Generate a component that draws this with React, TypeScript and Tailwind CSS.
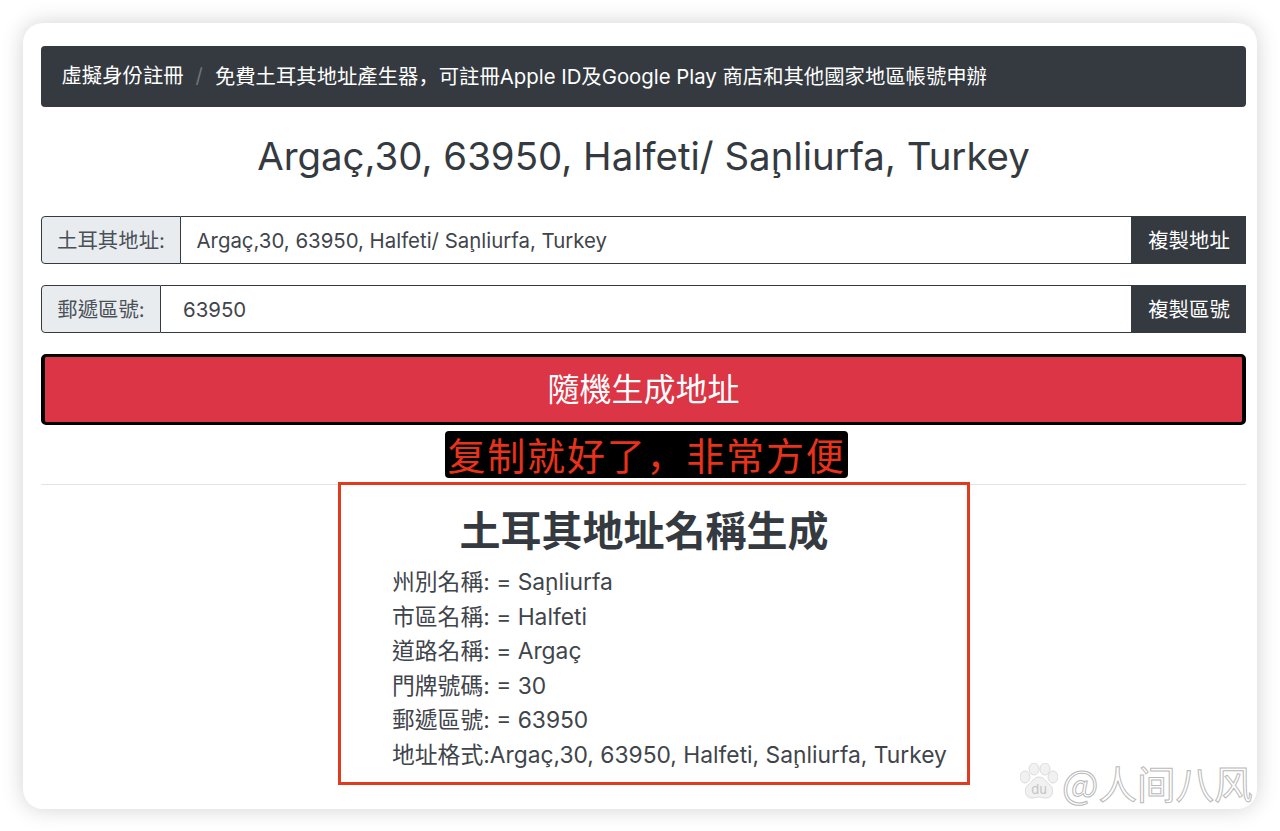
import React from "react";

const FONT = "font-['Inter','Noto_Sans_CJK_TC',sans-serif]";
const CITY = "Sa\u0327nliurfa";

function InputRow({ label, labelW, value, pad, action, mt }: { label: string; labelW: string; value: string; pad: string; action: string; mt: string }) {
  return (
    <div className={`flex h-[48px] ${mt}`}>
      <div className={`${labelW} shrink-0 flex items-center justify-center pt-[2px] bg-[#e9ecef] border border-[#343a40] rounded-l-[4px] text-[20.4px] text-[#495057]`}>{label}</div>
      <div className={`flex-1 flex items-center pt-[2px] ${pad} bg-white border-y border-r border-[#343a40] text-[20.4px] text-[#3f454b]`}>{value}</div>
      <div className="w-[114px] shrink-0 flex items-center justify-center pt-[2px] bg-[#343a40] text-white text-[20.4px]">{action}</div>
    </div>
  );
}

export default function App() {
  const lines = [
    `州別名稱: = ${CITY}`,
    "市區名稱: = Halfeti",
    "道路名稱: = Argaç",
    "門牌號碼: = 30",
    "郵遞區號: = 63950",
    `地址格式:Argaç,30, 63950, Halfeti, ${CITY}, Turkey`,
  ];
  return (
    <div className={`${FONT} relative w-[1280px] h-[831px] overflow-hidden bg-white pt-[23px] pl-[23px]`}>
      <div className="relative w-[1234px] h-[786px] bg-white rounded-[20px] shadow-[0_0_22px_rgba(0,0,0,0.18)] pl-[18px] pr-[11px] pt-[23px]">
        <nav className="h-[61px] flex items-center bg-[#343a40] rounded-[4px] pl-[20.5px] text-[20.35px] text-white whitespace-nowrap">
          <span>虛擬身份註冊</span>
          <span className="mx-[12px] text-[#6c757d]">/</span>
          <span>免費土耳其地址產生器<span className="font-['Noto_Sans_CJK_SC',sans-serif]">，</span>可註冊Apple ID及Google Play 商店和其他國家地區帳號申辦</span>
        </nav>
        <h1 className="h-[100px] flex items-center justify-center text-[38.4px] text-[#343a40] whitespace-nowrap">{`Argaç,30, 63950, Halfeti/ ${CITY}, Turkey`}</h1>
        <InputRow mt="mt-[9px]" label="土耳其地址:" labelW="w-[140px]" value={`Argaç,30, 63950, Halfeti/ ${CITY}, Turkey`} pad="pl-[15.5px]" action="複製地址" />
        <InputRow mt="mt-[21px]" label="郵遞區號:" labelW="w-[120px]" value="63950" pad="pl-[22px]" action="複製區號" />
        <button className="mt-[21px] w-full h-[71px] flex items-center justify-center bg-[#dc3545] border-y-[3px] border-x-[4px] border-black rounded-[5px] text-white text-[32px]">隨機生成地址</button>
        <div className="mt-[6px] pl-[404px]">
          <div className="h-[47px] w-[403px] flex items-center justify-center bg-black rounded-[4px] text-[#e8321a] text-[38px] tracking-[1.8px] whitespace-nowrap font-['Noto_Sans_CJK_SC',sans-serif]"><span className="-translate-y-[1px]">复制就好了，非常方便</span></div>
        </div>
        <div className="mt-[6px] h-px bg-[#e4e4e4]" />
        <section className="relative -mt-[3px] ml-[297px] w-[632px] h-[303px] border-[3px] border-[#e03a1f] bg-white">
          <h2 className="mt-[21px] ml-[-20px] text-center text-[41px] font-bold leading-[50px] text-[#343a40]">土耳其地址名稱生成</h2>
          <ul className="mt-[9px] ml-[51px] text-[22.8px] leading-[34.6px] text-[#3f454b] whitespace-nowrap">
            {lines.map((l) => <li key={l}>{l}</li>)}
          </ul>
        </section>
        <div className="absolute left-[997px] top-[740px] flex items-center">
          <svg width="38" height="38" viewBox="0 0 38 38" className="mr-[4px]">
            <g fill="#f1f1f1" stroke="#dcdcdc" strokeWidth="1">
              <ellipse cx="5" cy="14" rx="5" ry="6" />
              <ellipse cx="14" cy="6" rx="5" ry="6" />
              <ellipse cx="25" cy="6" rx="5" ry="6" />
              <ellipse cx="33" cy="14" rx="5" ry="6" />
              <path d="M19 14c-5 0-7 5-11 8-4 3-4 13 4 13 3 0 5-1 7-1s4 1 7 1c8 0 8-10 4-13-4-3-6-8-11-8z" />
            </g>
            <text x="19" y="31" textAnchor="middle" fontSize="13" fill="#c4c4c4" fontFamily="Inter, sans-serif">du</text>
          </svg>
          <span className="text-[38.5px] leading-none text-white [-webkit-text-stroke:1px_#b9b9b9] font-['Noto_Sans_CJK_SC',sans-serif] whitespace-nowrap">@人间八风</span>
        </div>
      </div>
    </div>
  );
}
